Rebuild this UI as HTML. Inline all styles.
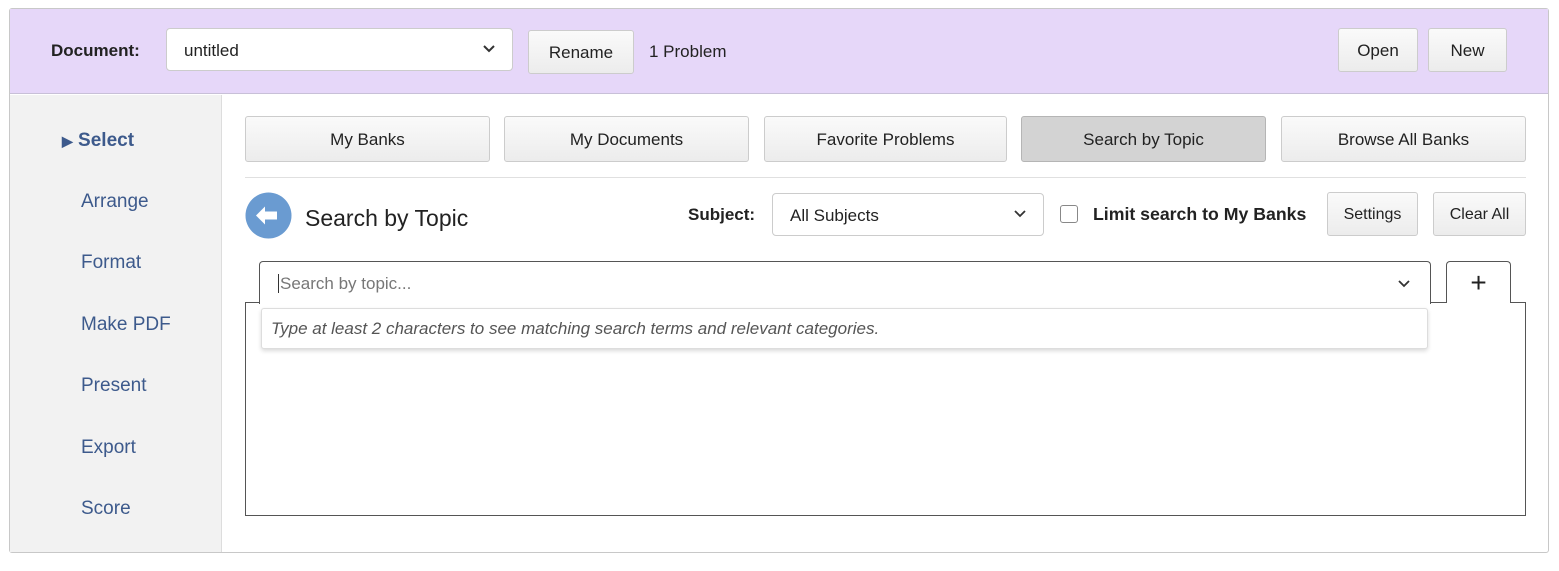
<!DOCTYPE html>
<html><head><style>
*{box-sizing:border-box;margin:0;padding:0}
body{width:1559px;height:571px;background:#fff;font-family:"Liberation Sans",Arial,sans-serif;position:relative;overflow:hidden;color:#222}
.a{position:absolute}
.btn{position:absolute;border:1px solid #ccc;border-radius:3px;background:linear-gradient(#fafafa,#ececec);font-size:17px;color:#222;display:flex;align-items:center;justify-content:center;padding-top:2px}
.side{position:absolute;left:81px;font-size:19px;color:#3d5a8c}
</style></head><body>
<div class="a" style="left:9px;top:8px;width:1540px;height:545px;border:1px solid #c8c8c8;border-radius:3px"></div>
<div class="a" style="left:10px;top:9px;width:1538px;height:85px;background:#e6d7f9;border-bottom:1px solid #c8c0d8"></div>
<div class="a" style="left:51px;top:41px;font-size:17px;font-weight:bold">Document:</div>
<div class="a" style="left:166px;top:28px;width:347px;height:43px;background:#fff;border:1px solid #ccc;border-radius:4px;font-size:17px;padding:12px 0 0 17px">untitled</div>
<svg class="a" style="left:482px;top:44px" width="14" height="10"><path d="M2 2l5 5 5-5" stroke="#333" stroke-width="2" fill="none"/></svg>
<div class="btn" style="left:528px;top:30px;width:106px;height:44px">Rename</div>
<div class="a" style="left:649px;top:42px;font-size:17px">1 Problem</div>
<div class="btn" style="left:1338px;top:28px;width:80px;height:44px">Open</div>
<div class="btn" style="left:1428px;top:28px;width:79px;height:44px">New</div>
<div class="a" style="left:10px;top:95px;width:212px;height:457px;background:#f2f2f2;border-right:1px solid #ddd"></div>
<div class="a" style="left:62px;top:130px;font-size:19px;color:#3d5a8c;font-weight:bold"><span style="font-size:14px">&#9654;</span> Select</div>
<div class="side" style="top:191px">Arrange</div>
<div class="side" style="top:252px">Format</div>
<div class="side" style="top:314px">Make PDF</div>
<div class="side" style="top:375px">Present</div>
<div class="side" style="top:437px">Export</div>
<div class="side" style="top:498px">Score</div>
<div class="btn" style="left:245px;top:116px;width:245px;height:46px">My Banks</div>
<div class="btn" style="left:504px;top:116px;width:245px;height:46px">My Documents</div>
<div class="btn" style="left:764px;top:116px;width:243px;height:46px">Favorite Problems</div>
<div class="btn" style="left:1021px;top:116px;width:245px;height:46px;background:#d3d3d3;border-color:#b5b5b5">Search by Topic</div>
<div class="btn" style="left:1281px;top:116px;width:245px;height:46px">Browse All Banks</div>
<div class="a" style="left:245px;top:177px;width:1281px;height:1px;background:#e0e0e0"></div>
<svg class="a" style="left:245px;top:192px" width="47" height="47"><circle cx="23.5" cy="23.5" r="23" fill="#6a9bd1"/><path d="M11 23.5l9-9v5h12v8H20v5z" fill="#fff"/></svg>
<div class="a" style="left:305px;top:205px;font-size:23px">Search by Topic</div>
<div class="a" style="left:688px;top:205px;font-size:17px;font-weight:bold">Subject:</div>
<div class="a" style="left:772px;top:193px;width:272px;height:43px;border:1px solid #ccc;border-radius:4px;font-size:17px;padding:12px 0 0 17px">All Subjects</div>
<svg class="a" style="left:1013px;top:209px" width="14" height="10"><path d="M2 2l5 5 5-5" stroke="#333" stroke-width="1.8" fill="none"/></svg>
<div class="a" style="left:1060px;top:205px;width:18px;height:18px;border:1px solid #888;border-radius:3px"></div>
<div class="a" style="left:1093px;top:204px;font-size:17.7px;font-weight:bold">Limit search to My Banks</div>
<div class="btn" style="left:1327px;top:192px;width:91px;height:44px;font-size:16px">Settings</div>
<div class="btn" style="left:1433px;top:192px;width:93px;height:44px;font-size:16px">Clear All</div>
<div class="a" style="left:245px;top:302px;width:1281px;height:214px;border:1px solid #555"></div>
<div class="a" style="left:259px;top:261px;width:1172px;height:43px;border:1px solid #555;border-bottom:none;border-radius:4px 4px 0 0;background:#fff;font-size:17px;color:#777;padding:12px 0 0 18px"><span style="border-left:1px solid #333;padding-left:1px">Search by topic...</span></div>
<svg class="a" style="left:1397px;top:279px" width="14" height="10"><path d="M2 2l5 5 5-5" stroke="#333" stroke-width="1.8" fill="none"/></svg>
<div class="a" style="left:1446px;top:261px;width:65px;height:42px;border:1px solid #555;border-bottom:none;border-radius:4px 4px 0 0;background:#fff;font-size:28px;text-align:center;line-height:42px">+</div>
<div class="a" style="left:261px;top:308px;width:1167px;height:41px;background:#fff;border:1px solid #ddd;border-radius:3px;box-shadow:0 2px 4px rgba(0,0,0,.15);font-size:17px;font-style:italic;color:#555;padding:10px 0 0 9px">Type at least 2 characters to see matching search terms and relevant categories.</div>
</body></html>
